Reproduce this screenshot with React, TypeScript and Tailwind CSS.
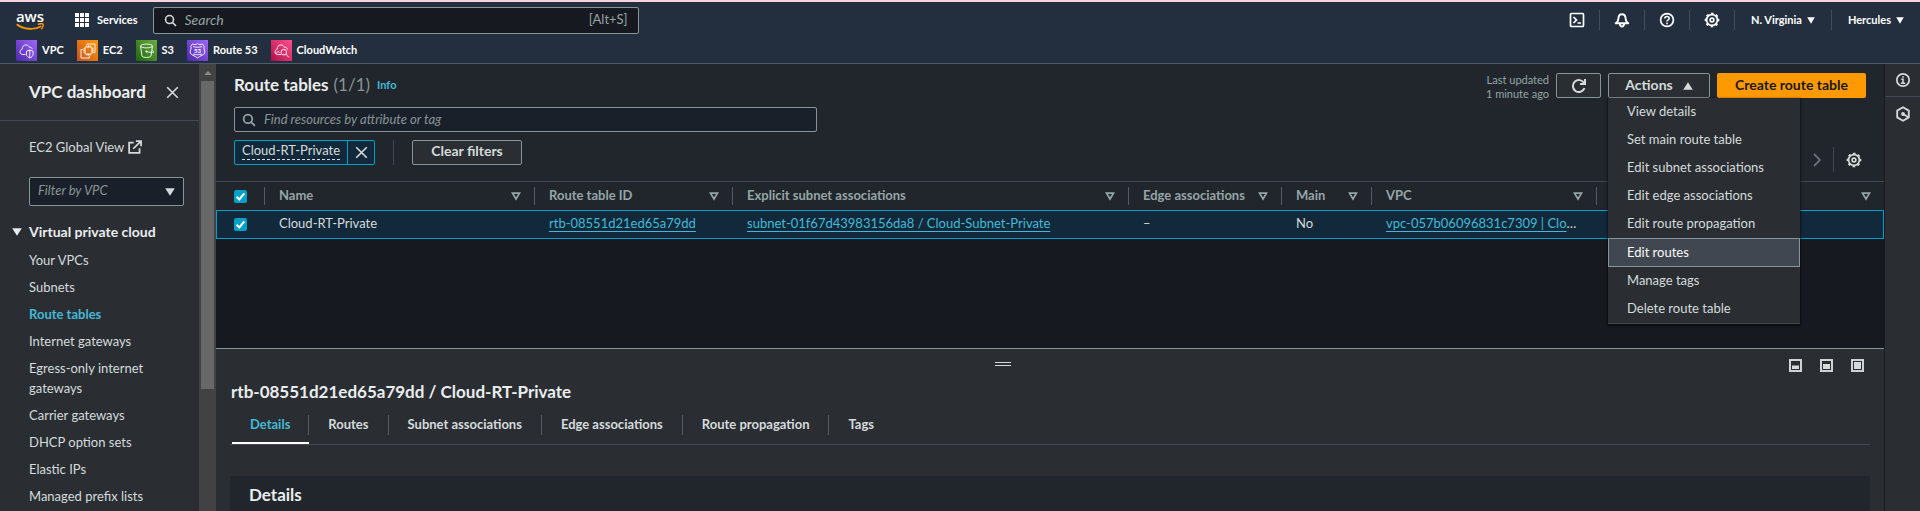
import React from "react";

type IconProps = { className?: string };

const SearchIcon = ({ className }: IconProps) => (
  <svg viewBox="0 0 16 16" className={className} fill="none" stroke="currentColor" strokeWidth="2" aria-hidden="true">
    <circle cx="6.8" cy="6.8" r="4.9" />
    <path d="M10.2 10.2 14.8 14.8" />
  </svg>
);

const GearIcon = ({ className }: IconProps) => (
  <svg viewBox="0 0 16 16" className={className} fill="none" stroke="currentColor" aria-hidden="true">
    <circle cx="8" cy="8" r="5.4" strokeWidth="1.7" />
    <circle cx="8" cy="8" r="6.6" strokeWidth="1.5" strokeDasharray="2.7 2.484" strokeDashoffset="1.35" />
    <circle cx="8" cy="8" r="1.9" strokeWidth="1.6" />
  </svg>
);

const CloseIcon = ({ className }: IconProps) => (
  <svg viewBox="0 0 16 16" className={className} fill="none" stroke="currentColor" strokeWidth="2" aria-hidden="true">
    <path d="M1.5 1.5 14.5 14.5M14.5 1.5 1.5 14.5" />
  </svg>
);

const CaretDown = ({ className }: IconProps) => (
  <svg viewBox="0 0 10 8" className={className} fill="currentColor" preserveAspectRatio="none" aria-hidden="true">
    <path d="M.2.2h9.6L5 7.8z" />
  </svg>
);

const SortIcon = () => (
  <svg viewBox="0 0 10 9" className="h-[9px] w-2.5 shrink-0" fill="none" stroke="currentColor" strokeWidth="1.7" aria-hidden="true">
    <path d="M1.5 1.2h7L5 7z" />
  </svg>
);

const AwsLogo = () => (
  <span className="flex w-7 flex-col items-center text-white">
    <span className="font-['Open_Sans',sans-serif] text-[15px] font-semibold leading-[14px]">aws</span>
    <svg viewBox="0 0 28 8" className="h-2 w-7" fill="none" aria-hidden="true">
      <path d="M.8 1.2C7.5 6.8 18.5 7.2 25.2 3.2" stroke="#ff9900" strokeWidth="1.9" />
      <path d="M21.8 1.3c2.3-.7 5-.6 5.3 0 .4.7-.2 3.2-1.8 4.9" stroke="#ff9900" strokeWidth="1.4" />
    </svg>
  </span>
);

const GridIcon = () => (
  <svg viewBox="0 0 14 14" className="size-3.5" fill="currentColor" aria-hidden="true">
    {[0, 5, 10].map((y) => [0, 5, 10].map((x) => <rect key={`${x}${y}`} x={x} y={y} width="4" height="4" />))}
  </svg>
);

const TerminalIcon = () => (
  <svg viewBox="0 0 16 16" className="size-4" fill="none" stroke="currentColor" strokeWidth="1.7" aria-hidden="true">
    <rect x="1.5" y="1.5" width="13" height="13" rx="1" />
    <path d="M4.5 5 7.5 8 4.5 11M8.5 11H12" />
  </svg>
);

const BellIcon = () => (
  <svg viewBox="0 0 16 16" className="size-4" fill="none" stroke="currentColor" strokeWidth="1.9" strokeLinejoin="round" aria-hidden="true">
    <path d="M1.7 11.2C3.8 10 4.3 8.7 4.4 6.5 4.5 3.8 5.7 2.2 8 2.2s3.5 1.600 3.600 4.300c.1 2.200.6 3.500 2.700 4.700z" />
    <path d="M5.9 12c.2 1.700 1 2.500 2.100 2.500s1.900-.8 2.100-2.500" />
  </svg>
);

const HelpIcon = () => (
  <svg viewBox="0 0 16 16" className="size-4" fill="none" stroke="currentColor" strokeWidth="1.7" aria-hidden="true">
    <circle cx="8" cy="8" r="6.4" />
    <path d="M5.800 6.600C5.800 5.300 6.700 4.600 8 4.600s2.200.7 2.200 1.900C10.200 7.900 8 7.900 8 9.600M8 10.600v1.600" strokeWidth="1.5" />
  </svg>
);

const InfoIcon = () => (
  <svg viewBox="0 0 16 16" className="size-4" fill="none" stroke="currentColor" strokeWidth="1.7" aria-hidden="true">
    <circle cx="8" cy="8" r="6.2" />
    <path d="M6.300 7.300H8v4M5.900 11.300h4.200M7.200 4.900h1.600" strokeWidth="1.5" />
  </svg>
);

const HexIcon = () => (
  <svg viewBox="0 0 16 16" className="size-4" fill="none" stroke="currentColor" strokeWidth="1.8" aria-hidden="true">
    <path d="M8 1.300 13.800 4.600v6.800L8 14.700 2.200 11.400V4.600z" />
    <circle cx="8" cy="8" r="1.9" fill="currentColor" stroke="none" />
    <path d="M8 8 13.500 11.200" />
  </svg>
);

const RefreshIcon = () => (
  <svg viewBox="0 0 16 16" className="size-4" fill="none" stroke="currentColor" strokeWidth="2" aria-hidden="true">
    <path d="M13.500 10.200A6 6 0 1 1 13.200 5.200" />
    <path d="M14 1v5H9" />
  </svg>
);

const ExternalIcon = () => (
  <svg viewBox="0 0 16 16" className="size-3.5" fill="none" stroke="currentColor" strokeWidth="2" aria-hidden="true">
    <path d="M6.500 3H1.300v11.800h11.900V9.500M9 1.200h5.900V7M14.500 1.500 6 10" />
  </svg>
);

const PanelIcon = ({ kind }: { kind: "bottom" | "half" | "full" }) => (
  <svg viewBox="0 0 13 13" className="size-[13px]" aria-hidden="true">
    <rect x="1" y="1" width="11" height="11" fill="none" stroke="currentColor" strokeWidth="1.9" />
    {kind === "bottom" && <rect x="3" y="6.5" width="7" height="3.5" fill="currentColor" />}
    {kind === "half" && <rect x="3" y="5" width="7" height="5" fill="currentColor" />}
    {kind === "full" && <rect x="3" y="3" width="7" height="7" fill="currentColor" />}
  </svg>
);

const glyphs: Record<string, React.ReactNode> = {
  VPC: (
    <>
      <path d="M9.500 14.500H6.800C5.200 14.500 4 13.400 4 11.900c0-1.400 1-2.300 2.100-2.500C6 7 7.500 4.900 9.900 4.900c1.700 0 2.900 1 3.400 2.400 1.700-.4 2.800.6 2.900 2" />
      <path d="M10.500 11.300 13.800 10l3.300 1.300v2.900c0 1.800-1.500 3-3.300 3.800-1.800-.8-3.300-2-3.300-3.800zM13.800 10v8" />
    </>
  ),
  EC2: (
    <>
      <rect x="8" y="7" width="7" height="7" rx=".6" />
      <path d="M9.800 7V5.400M11.500 7V5.400M13.200 7V5.400M15 8.800h1.600M15 10.500h1.600M15 12.200h1.600M9.800 14v1.600M11.500 14v1.600M13.200 14v1.600M8 8.800H6.400M8 10.500H6.400M8 12.200H6.400" />
      <path d="M10 5V4h8v8.500h-1.500M5.800 9.500H4V18h8.500v-2" />
    </>
  ),
  S3: (
    <>
      <ellipse cx="10.5" cy="6" rx="6" ry="1.9" />
      <path d="M4.500 6 6 16c.2 1.900 8.800 1.900 9 0L16.500 6M10.500 11.500c2 .7 4 1 6 1 1.500 0 1.800-.6-.5-2.200" />
      <circle cx="10.5" cy="11.5" r=".7" />
    </>
  ),
  "Route 53": (
    <>
      <path d="M10.500 3.500c1.300 1.300 3.300 1.300 4.900.4l1.800 2.400c-1.300 2 1.200 4 .5 6.600-.6 2.300-4.300 2.600-7.200 5-2.900-2.400-6.600-2.700-7.200-5-.7-2.600 1.800-4.600.5-6.600l1.800-2.400c1.600.9 3.600.9 4.900-.4z" />
      <path d="M6 6.500c3 1 6 1 9 0M6 14c3 1 6 1 9 0" />
      <text x="10.5" y="12.7" textAnchor="middle" fontSize="6" fontWeight="700" fill="#fff" stroke="none">53</text>
    </>
  ),
  CloudWatch: (
    <>
      <path d="M10 14.500H6.800C5.200 14.500 4 13.400 4 11.900c0-1.400 1-2.300 2.100-2.500C6 7 7.500 4.900 9.900 4.900c1.700 0 2.900 1 3.400 2.400 1.700-.4 2.900.6 3 2.200" />
      <circle cx="12.8" cy="12.2" r="2.8" />
      <path d="m14.900 14.200 2.900 3.100M4.800 13.800 7 11.300l1.700 1.200" />
    </>
  ),
};

const favourites = [
  { name: "VPC", bg: "from-[#4d27a8] to-[#a166ff]" },
  { name: "EC2", bg: "from-[#c8511b] to-[#ff9900]" },
  { name: "S3", bg: "from-[#1b660f] to-[#6cae3e]" },
  { name: "Route 53", bg: "from-[#4d27a8] to-[#a166ff]" },
  { name: "CloudWatch", bg: "from-[#b0084d] to-[#ff4f8b]" },
];

const NavDivider = () => <span className="h-5 w-px bg-[#414d5c]" />;

const iconCell = "flex w-11 justify-center";

function TopNav() {
  return (
    <header className="shrink-0 border-t-2 border-b border-t-[#f6d4dd] border-b-[#4f5b66] bg-[#232f3e] text-[11px] font-bold text-white">
      <div className="flex h-9 items-center pl-4">
        <a href="#home" aria-label="AWS home">
          <AwsLogo />
        </a>
        <span className="ml-[15px]">
          <NavDivider />
        </span>
        <button type="button" className="ml-4 flex items-center gap-2">
          <GridIcon />
          Services
        </button>
        <label className="ml-[15px] flex h-[27px] w-[486px] min-w-0 items-center rounded-xs border border-[#879596] bg-[#16191f] px-2.5 font-normal text-[#95a5a6]">
          <SearchIcon className="size-[13px] shrink-0 text-[#d5dbdb]" />
          <input aria-label="Search" placeholder="Search" className="ml-2 min-w-0 flex-1 bg-transparent text-sm outline-none placeholder:italic placeholder:text-[#95a5a6]" />
          <span className="text-[13px]">[Alt+S]</span>
        </label>
        <div className="ml-auto flex items-center">
          <button type="button" aria-label="CloudShell" className={iconCell}><TerminalIcon /></button>
          <NavDivider />
          <button type="button" aria-label="Notifications" className={iconCell}><BellIcon /></button>
          <NavDivider />
          <button type="button" aria-label="Help" className={iconCell}><HelpIcon /></button>
          <NavDivider />
          <button type="button" aria-label="Settings" className={iconCell}><GearIcon className="size-4" /></button>
          <NavDivider />
          <button type="button" className="flex items-center gap-[5px] px-4">
            N. Virginia <CaretDown className="h-[7px] w-2" />
          </button>
          <NavDivider />
          <button type="button" className="flex items-center gap-[5px] px-4">
            Hercules <CaretDown className="h-[7px] w-2" />
          </button>
        </div>
      </div>
      <nav className="flex h-[25px] items-center gap-[13px] pb-px pl-4">
        {favourites.map(({ name, bg }) => (
          <a key={name} href={`#${name}`} className="flex items-center gap-[5px]">
            <span className={`size-[21px] bg-linear-to-tr ${bg}`}>
              <svg viewBox="0 0 21 21" className="size-[21px]" fill="none" stroke="#fff" strokeWidth=".9" aria-hidden="true">
                {glyphs[name]}
              </svg>
            </span>
            {name}
          </a>
        ))}
      </nav>
    </header>
  );
}

const sideLinks = [
  "Your VPCs",
  "Subnets",
  "Route tables",
  "Internet gateways",
  "Egress-only internet gateways",
  "Carrier gateways",
  "DHCP option sets",
  "Elastic IPs",
  "Managed prefix lists",
];

function Sidebar() {
  return (
    <aside className="flex w-[216px] shrink-0 bg-[#2a2e33]">
      <div className="min-w-0 flex-1 overflow-hidden">
        <div className="flex h-[57px] items-center justify-between border-b border-[#414750] pr-5 pl-[29px]">
          <h2 className="text-[17px] font-bold text-[#eaeded]">VPC dashboard</h2>
          <button type="button" aria-label="Close navigation">
            <CloseIcon className="size-[13px]" />
          </button>
        </div>
        <a href="#global" className="mt-4 ml-[29px] flex items-center gap-1 leading-5">
          EC2 Global View <ExternalIcon />
        </a>
        <div className="mt-5 mr-[15px] ml-[29px] grid items-center">
          <select aria-label="Filter by VPC" className="col-start-1 row-start-1 h-[29px] w-full appearance-none rounded-xs border border-[#879596] bg-[#1a2029] px-2 pb-0.5 text-[#879596] italic outline-none">
            <option>Filter by VPC</option>
          </select>
          <CaretDown className="pointer-events-none col-start-1 row-start-1 mr-[9px] h-2 w-2.5 justify-self-end" />
        </div>
        <button type="button" className="mt-4 flex items-center gap-[7px] pl-3 text-sm leading-5 font-bold text-[#eaeded]">
          <CaretDown className="h-2 w-2.5" /> Virtual private cloud
        </button>
        <ul className="mt-2 flex flex-col gap-[7px] pr-9 pl-[29px]">
          {sideLinks.map((label) => (
            <li key={label} className="leading-5">
              <a href={`#${label}`} className={label === "Route tables" ? "font-bold text-[#44b9d6]" : ""}>
                {label}
              </a>
            </li>
          ))}
        </ul>
      </div>
      <div className="flex w-[17px] flex-col items-center bg-[#424242]" aria-hidden="true">
        <div className="flex h-[17px] shrink-0 items-center text-[#868686]">
          <CaretDown className="h-1 w-2 rotate-180" />
        </div>
        <div className="h-[69%] w-[13px] bg-[#686868]" />
      </div>
    </aside>
  );
}

const actions = [
  "View details",
  "Set main route table",
  "Edit subnet associations",
  "Edit edge associations",
  "Edit route propagation",
  "Edit routes",
  "Manage tags",
  "Delete route table",
];

const outlined = "flex h-[25px] items-center justify-center rounded-xs border border-[#879596] bg-[#2a2e33] text-sm font-bold";

function ActionsMenu() {
  return (
    <div className="relative">
      <button type="button" aria-expanded="true" className={`${outlined} w-[102px] gap-2.5 pb-0.5`}>
        Actions <CaretDown className="mt-0.5 h-2 w-2.5 rotate-180" />
      </button>
      <ul className="absolute top-full left-0 z-10 w-48 border-b border-[#414750] bg-[#2a2e33] shadow-[0_1px_2px_1px_rgba(0,0,0,0.5)]">
        {actions.map((label) => (
          <li key={label}>
            <button
              type="button"
              className={
                label === "Edit routes"
                  ? "block h-[29px] w-full border border-[#879596] bg-[#414750] px-[18px] text-left text-[#fafafa]"
                  : "block h-7 w-full px-[19px] text-left"
              }
            >
              {label}
            </button>
          </li>
        ))}
      </ul>
    </div>
  );
}

function Tick({ label }: { label: string }) {
  return (
    <span className="grid size-[13px]">
      <input type="checkbox" defaultChecked aria-label={label} className="col-start-1 row-start-1 size-[13px] appearance-none rounded-xs bg-[#00a1c9]" />
      <svg viewBox="0 0 13 13" className="pointer-events-none col-start-1 row-start-1 size-[13px]" fill="none" stroke="#fff" strokeWidth="2" aria-hidden="true">
        <path d="M2.5 6.8 5.3 9.5 10.3 3.3" />
      </svg>
    </span>
  );
}

const columns = [
  { label: "Name", width: "w-[270px]" },
  { label: "Route table ID", width: "w-[198px]" },
  { label: "Explicit subnet associations", width: "w-[396px]" },
  { label: "Edge associations", width: "w-[153px]" },
  { label: "Main", width: "w-[90px]" },
  { label: "VPC", width: "w-[225px]" },
  { label: "", width: "" },
];

const cell = "h-[29px] border-y border-[#00a1c9] pb-0.5 pl-[15px]";
const link = "text-[#44b9d6] underline underline-offset-[3px]";

function RouteTable() {
  return (
    <table className="w-full table-fixed border-separate border-spacing-0 text-left">
      <thead className="bg-[#21252c] text-[#95a5a6]">
        <tr>
          <th className="h-[29px] w-12 border-t border-[#414750] p-0 pl-[18px]">
            <Tick label="Select all" />
          </th>
          {columns.map(({ label, width }) => (
            <th key={label} className={`h-[29px] border-t border-[#414750] p-0 ${width}`}>
              <div className="flex h-[18px] items-center border-l border-[#545b64] pr-[13px] pl-[14px]">
                {label}
                <button type="button" aria-label={`Sort ${label}`} className="ml-auto">
                  <SortIcon />
                </button>
              </div>
            </th>
          ))}
        </tr>
      </thead>
      <tbody className="bg-[#12293b]">
        <tr>
          <td className="h-[29px] border-y border-l border-[#00a1c9] p-0 pl-[17px]">
            <Tick label="Select Cloud-RT-Private" />
          </td>
          <td className={cell}>Cloud-RT-Private</td>
          <td className={cell}>
            <a href="#rtb" className={link}>rtb-08551d21ed65a79dd</a>
          </td>
          <td className={cell}>
            <a href="#subnet" className={link}>subnet-01f67d43983156da8 / Cloud-Subnet-Private</a>
          </td>
          <td className={cell}>–</td>
          <td className={cell}>No</td>
          <td className={`${cell} whitespace-nowrap`}>
            <a href="#vpc" className={link}>vpc-057b06096831c7309 | Clo</a>…
          </td>
          <td className={`${cell} border-r`} />
        </tr>
      </tbody>
    </table>
  );
}

function Listing() {
  return (
    <section className="min-h-0 flex-1 bg-[#16191f]">
      <div className="flex h-[117px] flex-col bg-[#21252c] px-[18px]">
        <div className="flex h-[43px] items-start gap-[7px] pt-[9px]">
          <h1 className="flex h-[25px] items-center pb-0.5 text-[17px] font-bold text-[#eaeded]">
            Route tables<span className="ml-[5px] font-normal text-[#879596]">(1/1)</span>
          </h1>
          <a href="#info" className="flex h-[25px] items-center text-[11px] font-bold text-[#44b9d6]">Info</a>
          <p className="ml-auto text-right text-[11px] leading-[14px] text-[#95a5a6]">
            Last updated
            <br />1 minute ago
          </p>
          <button type="button" aria-label="Refresh" className={`${outlined} w-[45px]`}>
            <RefreshIcon />
          </button>
          <ActionsMenu />
          <button type="button" className="h-[25px] w-[149px] rounded-xs bg-[#ff9900] pb-0.5 text-sm font-bold text-[#16191f]">
            Create route table
          </button>
        </div>
        <label className="flex h-[25px] w-[583px] max-w-full items-center gap-2 rounded-xs border border-[#879596] bg-[#1a2029] px-[7px]">
          <SearchIcon className="size-3.5 shrink-0 text-[#95a5a6]" />
          <input aria-label="Find resources" placeholder="Find resources by attribute or tag" className="min-w-0 flex-1 bg-transparent outline-none placeholder:text-[#879596] placeholder:italic" />
        </label>
        <div className="mt-2 flex items-center">
          <div className="flex h-[25px] items-stretch rounded-xs border border-[#00a1c9] bg-[#12293b]">
            <button type="button" className="flex items-start px-[7px]">
              <span className="border-b border-dashed border-[#d5dbdb] pt-px leading-[17px]">Cloud-RT-Private</span>
            </button>
            <button type="button" aria-label="Remove filter" className="flex w-[27px] items-center justify-center border-l border-[#00a1c9]">
              <CloseIcon className="size-[13px]" />
            </button>
          </div>
          <span className="ml-[18px] h-[25px] w-px bg-[#414750]" />
          <button type="button" className={`${outlined} ml-[18px] w-[110px] pb-1`}>Clear filters</button>
          <div className="mt-[7px] -mb-[7px] ml-auto flex items-center gap-3">
            <button type="button" aria-label="Next page">
              <svg viewBox="0 0 8 14" className="h-3.5 w-2" fill="none" stroke="#687078" strokeWidth="1.8" aria-hidden="true">
                <path d="m1 1 6 6-6 6" />
              </svg>
            </button>
            <span className="h-[25px] w-px bg-[#414750]" />
            <button type="button" aria-label="Preferences" className="mr-1">
              <GearIcon className="size-4" />
            </button>
          </div>
        </div>
      </div>
      <RouteTable />
    </section>
  );
}

const tabs = ["Details", "Routes", "Subnet associations", "Edge associations", "Route propagation", "Tags"];

function SplitPanel() {
  return (
    <section className="grid h-[163px] shrink-0 grid-rows-[auto_auto_auto_1fr] overflow-hidden border-t border-[#879596] bg-[#2a2e33]">
      <div className="flex h-[31px] items-center pr-5">
        <div className="flex flex-1 justify-center">
          <button type="button" aria-label="Resize panel" className="mb-0.5 h-1 w-4 border-y border-[#d5dbdb]" />
        </div>
        <div className="mt-0.5 flex items-center gap-[18px]">
          <button type="button" aria-label="Small panel"><PanelIcon kind="bottom" /></button>
          <button type="button" aria-label="Medium panel"><PanelIcon kind="half" /></button>
          <button type="button" aria-label="Full panel"><PanelIcon kind="full" /></button>
        </div>
      </div>
      <h2 className="pl-[15px] text-[17px] leading-6 font-bold text-[#eaeded]">rtb-08551d21ed65a79dd / Cloud-RT-Private</h2>
      <div role="tablist" className="mx-3.5 flex h-[41px] border-b border-[#414750] pt-[9px]">
        {tabs.map((tab, i) => (
          <button
            key={tab}
            type="button"
            role="tab"
            aria-selected={i === 0}
            className={
              i === 0
                ? "ml-0.5 flex flex-col items-stretch border-b-2 border-white text-[#44b9d6]"
                : "flex flex-col items-stretch border-b-2 border-transparent"
            }
          >
            <span className={`mt-0.5 flex h-5 items-center text-[13px] font-bold ${i === tabs.length - 1 ? "" : "border-r border-[#545b64]"} ${i === 0 ? "px-[18px]" : "px-[19px]"}`}>
              {tab}
            </span>
          </button>
        ))}
      </div>
      <div className="mx-3.5 mt-[31px] bg-[#21252c] pt-[7px] pl-[19px]">
        <h3 className="text-[17px] leading-6 font-bold text-[#eaeded]">Details</h3>
      </div>
    </section>
  );
}

export default function App() {
  return (
    <div className="flex h-screen flex-col overflow-hidden bg-[#16191f] font-['Lato',sans-serif] text-[13px] text-[#d5dbdb]">
      <TopNav />
      <div className="flex min-h-0 flex-1">
        <Sidebar />
        <main className="flex min-w-0 flex-1 flex-col">
          <Listing />
          <SplitPanel />
        </main>
        <aside className="w-9 shrink-0 border-l border-[#16191f] bg-[#2a2e33]">
          <button type="button" aria-label="Info panel" className="flex h-[33px] w-full items-center justify-center border-b border-[#414750]">
            <InfoIcon />
          </button>
          <button type="button" aria-label="Tutorials" className="flex h-[33px] w-full items-center justify-center">
            <HexIcon />
          </button>
        </aside>
      </div>
    </div>
  );
}
